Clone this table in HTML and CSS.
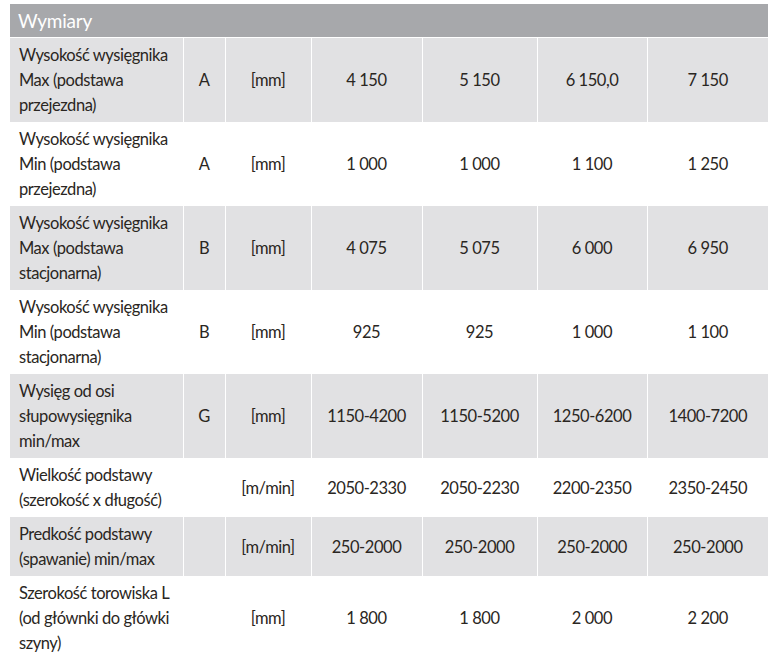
FILE: index.html
```html
<!DOCTYPE html>
<html lang="pl">
<head>
<meta charset="utf-8">
<title>Wymiary</title>
<link rel="stylesheet" href="styles.css">
</head>
<body>
<table class="spec">
  <colgroup>
    <col class="c-name"><col class="c-sym"><col class="c-unit"><col class="c-v1"><col class="c-v2"><col class="c-v3"><col class="c-v4">
  </colgroup>
  <thead>
    <tr><th colspan="7" class="title">Wymiary</th></tr>
  </thead>
  <tbody>
    <tr class="shade">
      <td class="name">Wysokość wysięgnika<br>Max (podstawa<br>przejezdna)</td>
      <td>A</td><td>[mm]</td><td>4 150</td><td>5 150</td><td>6 150,0</td><td>7 150</td>
    </tr>
    <tr>
      <td class="name">Wysokość wysięgnika<br>Min (podstawa<br>przejezdna)</td>
      <td>A</td><td>[mm]</td><td>1 000</td><td>1 000</td><td>1 100</td><td>1 250</td>
    </tr>
    <tr class="shade">
      <td class="name">Wysokość wysięgnika<br>Max (podstawa<br>stacjonarna)</td>
      <td>B</td><td>[mm]</td><td>4 075</td><td>5 075</td><td>6 000</td><td>6 950</td>
    </tr>
    <tr>
      <td class="name">Wysokość wysięgnika<br>Min (podstawa<br>stacjonarna)</td>
      <td>B</td><td>[mm]</td><td>925</td><td>925</td><td>1 000</td><td>1 100</td>
    </tr>
    <tr class="shade">
      <td class="name">Wysięg od osi<br>słupowysięgnika<br>min/max</td>
      <td>G</td><td>[mm]</td><td>1150-4200</td><td>1150-5200</td><td>1250-6200</td><td>1400-7200</td>
    </tr>
    <tr>
      <td class="name">Wielkość podstawy<br>(szerokość x długość)</td>
      <td></td><td>[m/min]</td><td>2050-2330</td><td>2050-2230</td><td>2200-2350</td><td>2350-2450</td>
    </tr>
    <tr class="shade">
      <td class="name">Predkość podstawy<br>(spawanie) min/max</td>
      <td></td><td>[m/min]</td><td>250-2000</td><td>250-2000</td><td>250-2000</td><td>250-2000</td>
    </tr>
    <tr>
      <td class="name">Szerokość torowiska L<br>(od głównki do główki<br>szyny)</td>
      <td></td><td>[mm]</td><td>1 800</td><td>1 800</td><td>2 000</td><td>2 200</td>
    </tr>
  </tbody>
</table>
</body>
</html>
```
FILE: styles.css
```css
html, body {
  margin: 0;
  padding: 0;
  background: #ffffff;
}

body {
  padding: 4px 12px 0 10px;
  font-family: "Lato", "Open Sans", sans-serif;
  color: #2a2622;
}

.spec {
  width: 758px;
  border-collapse: collapse;
  table-layout: fixed;
  font-size: 16.5px;
  line-height: 25px;
  letter-spacing: -0.45px;
}

.c-name { width: 173px; }
.c-sym { width: 42px; }
.c-unit { width: 86px; }
.c-v1 { width: 111px; }
.c-v2 { width: 115px; }
.c-v3 { width: 110px; }
.c-v4 { width: 121px; }

.title {
  background: #a7a8ab;
  color: #ffffff;
  font-weight: normal;
  font-size: 19px;
  letter-spacing: -0.2px;
  text-align: left;
  height: 33px;
  padding: 0 0 0 8px;
  border-bottom: 1px solid #ffffff;
}

.spec td {
  border: 1px solid #ffffff;
  border-top: 0;
  border-bottom: 0;
  text-align: center;
  vertical-align: middle;
  padding: 5px 4px 4px;
  white-space: nowrap;
}

.spec tr.shade td {
  background: #e1e1e3;
}

.spec tr td:first-child { border-left: 0; }
.spec tr td:last-child { border-right: 0; }

.spec td.name {
  text-align: left;
  padding-left: 9px;
  padding-right: 2px;
}
```
